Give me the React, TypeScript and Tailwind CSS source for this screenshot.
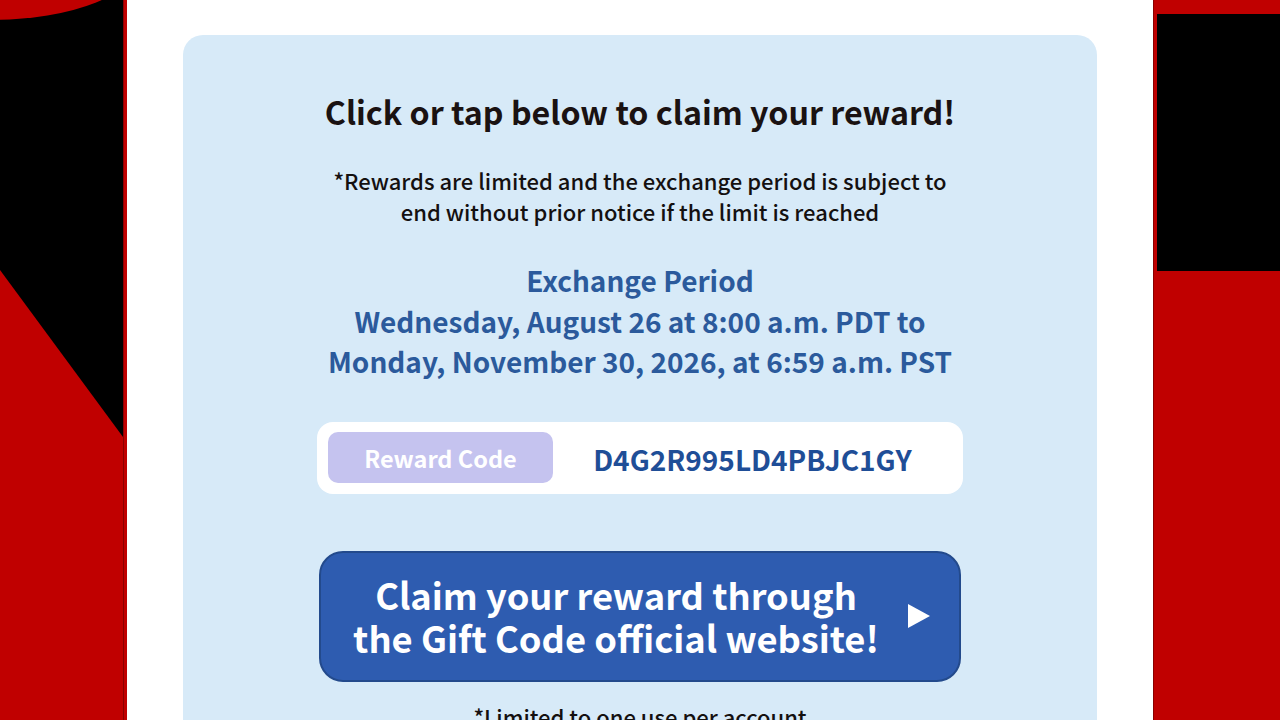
import React from 'react';

const font = { fontFamily: '"Noto Sans CJK JP", "Noto Sans", sans-serif' };

function LeftArt() {
  return (
    <div className="w-[127px] h-full bg-[#c00000] shrink-0">
      <svg width="127" height="720" viewBox="0 0 127 720" className="block">
        <rect x="0" y="0" width="127" height="720" fill="#c00000" />
        <polygon points="0,0 123,0 123,437 0,270" fill="#000000" />
        <ellipse cx="-10" cy="-40" rx="150" ry="60" fill="#c00000" />
        <rect x="123" y="0" width="1" height="720" fill="#8a0000" />
      </svg>
    </div>
  );
}

function RightArt() {
  return (
    <div className="w-[127px] h-full bg-[#c00000] shrink-0 pl-[3px] pt-[14px] border-l border-[#8a0000]">
      <div className="h-[257px] bg-black" />
    </div>
  );
}

export default function App() {
  return (
    <div className="w-[1280px] h-[720px] overflow-hidden flex bg-[#c00000]" style={font}>
      <LeftArt />

      <div className="w-[1026px] h-full bg-white px-[56px] pt-[35px] shrink-0">
        <div className="h-[720px] bg-[#d7eaf8] rounded-[20px] flex flex-col items-center pt-[56px] text-center">
          <h1 className="text-[32.2px] leading-[40px] font-bold text-[#1a1212]">
            Click or tap below to claim your reward!
          </h1>

          <p className="mt-[34px] text-[22px] leading-[31px] font-medium text-[#141010]">
            *Rewards are limited and the exchange period is subject to
            <br />
            end without prior notice if the limit is reached
          </p>

          <div className="mt-[33px] text-[28px] leading-[40.5px] font-bold text-[#2b5a9c]">
            <div>Exchange Period</div>
            <div>Wednesday, August 26 at 8:00 a.m. PDT to</div>
            <div>Monday, November 30, 2026, at 6:59 a.m. PST</div>
          </div>

          <div className="mt-[40px] w-[646px] h-[72px] bg-white rounded-[16px] p-[11px] flex items-center">
            <div className="w-[225px] h-[51px] rounded-[10px] bg-[#c5c3ef] flex items-center justify-center text-white text-[23.5px] font-bold pt-[2px]">
              Reward Code
            </div>
            <div className="flex-1 text-center text-[28px] font-bold text-[#1f4e97] pt-[2px]">
              D4G2R995LD4PBJC1GY
            </div>
          </div>

          <button className="mt-[57px] w-[642px] h-[131px] rounded-[24px] bg-[#2e5cb0] border-2 border-[#234a8c] flex items-center justify-center relative text-white pr-[48px]">
            <span className="text-[36.3px] leading-[43px] font-bold">
              Claim your reward through
              <br />
              the Gift Code official website!
            </span>
            <svg width="22" height="24" viewBox="0 0 22 24" className="absolute right-[29px] top-1/2 -translate-y-1/2">
              <polygon points="0,0 22,12 0,24" fill="#ffffff" />
            </svg>
          </button>

          <p className="mt-[19px] text-[22px] leading-[31px] font-medium text-[#141010]">
            *Limited to one use per account
          </p>
        </div>
      </div>

      <RightArt />
    </div>
  );
}
